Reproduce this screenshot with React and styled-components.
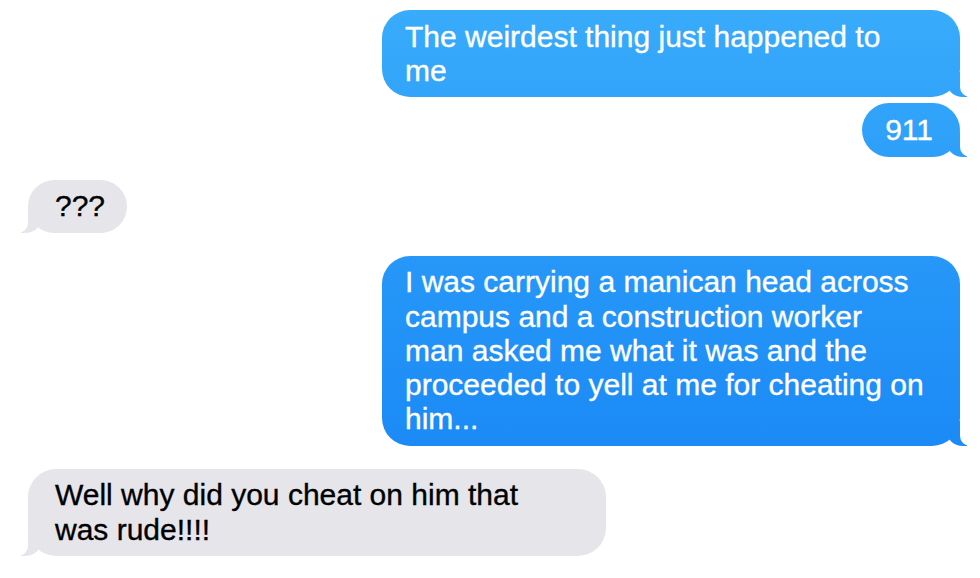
import React from "react";
import styled, { createGlobalStyle, css } from "styled-components";

const GlobalStyle = createGlobalStyle`
  html, body {
    margin: 0;
    padding: 0;
    background: #ffffff;
    overflow: hidden;
  }
  body {
    font-family: "Liberation Sans", Arial, Helvetica, sans-serif;
  }
`;

const BLUE = "linear-gradient(180deg, #39acfb 0px, #2a9cf9 200px, #1b8af6 450px, #1584f5 578px) fixed";
const GRAY = "#e5e5ea";

const Thread = styled.div`
  display: flex;
  flex-direction: column;
  padding: 10px 20px 0 28px;
  height: 578px;
  box-sizing: border-box;
`;

const Bubble = styled.div`
  position: relative;
  box-sizing: border-box;
  max-width: 578px;
  width: ${(p) => (p.$wide ? "578px" : "auto")};
  margin-top: ${(p) => (p.$first ? "0" : p.$tight ? "6px" : "23px")};
  border-radius: 28px;
  font-size: 30px;
  line-height: 34.2px;
  white-space: nowrap;
  -webkit-text-stroke: 0.35px currentColor;

  &::before,
  &::after {
    content: "";
    position: absolute;
    bottom: 0;
    height: 25px;
  }

  ${(p) =>
    p.$me
      ? css`
          align-self: flex-end;
          padding: 9.5px 27px 9.5px 23px;
          color: #ffffff;
          background: ${BLUE};

          &::before {
            right: -7px;
            width: 20px;
            background: ${BLUE};
            border-bottom-left-radius: 16px 14px;
          }
          &::after {
            right: -20px;
            width: 20px;
            background: #ffffff;
            border-bottom-left-radius: 10px;
          }
        `
      : css`
          align-self: flex-start;
          padding: 9.5px 22px 9.5px 27px;
          color: #000000;
          background: ${GRAY};

          &::before {
            left: -7px;
            width: 20px;
            background: ${GRAY};
            border-bottom-right-radius: 16px 14px;
          }
          &::after {
            left: -20px;
            width: 20px;
            background: #ffffff;
            border-bottom-right-radius: 10px;
          }
        `}
`;

const Line = styled.span`
  display: block;
`;

const messages = [
  { me: true, lines: ["The weirdest thing just happened to", "me"], wide: true },
  { me: true, lines: ["911"] },
  { me: false, lines: ["???"] },
  {
    me: true,
    wide: true,
    lines: [
      "I was carrying a manican head across",
      "campus and a construction worker",
      "man asked me what it was and the",
      "proceeded to yell at me for cheating on",
      "him...",
    ],
  },
  { me: false, wide: true, lines: ["Well why did you cheat on him that", "was rude!!!!"] },
];

const App = () => {
  return (
    <>
      <GlobalStyle />
      <Thread>
        {messages.map((m, i) => (
          <Bubble
            key={i}
            $me={m.me}
            $wide={m.wide}
            $first={i === 0}
            $tight={i > 0 && messages[i - 1].me === m.me}
          >
            {m.lines.map((l, j) => (
              <Line key={j}>{l}</Line>
            ))}
          </Bubble>
        ))}
      </Thread>
    </>
  );
};

export default App;
